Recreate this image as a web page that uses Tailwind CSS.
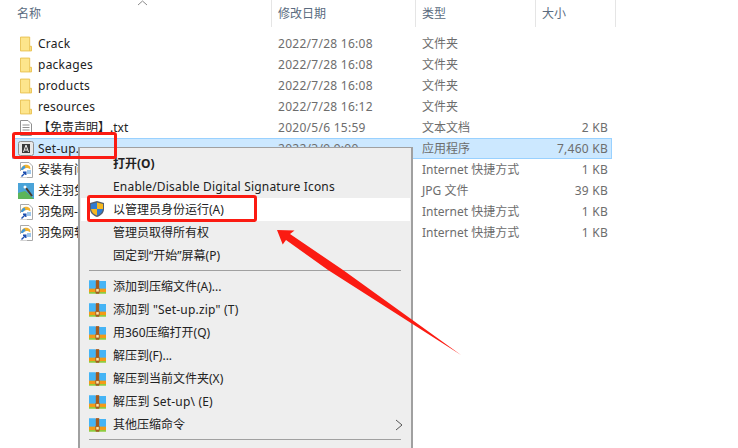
<!DOCTYPE html>
<html lang="zh">
<head>
<meta charset="utf-8">
<script src="https://cdn.jsdelivr.net/npm/@tailwindcss/browser@4"></script>
</head>
<body class="bg-white">
<svg width="0" height="0" class="absolute">
  <defs>
    <symbol id="folder" viewBox="0 0 13 16">
      <path d="M.5.5H10.500V10.500H12.500V15.500H.5Z" fill="#fde58c" stroke="#e8c050"/>
      <path d="M10.500 10.500V15.500" stroke="#e8c050"/>
    </symbol>
    <symbol id="link" viewBox="0 0 16 16">
      <path d="M2.500.5H11L14.500 4V15.500H2.500Z" fill="#fff" stroke="#a9a9a9"/>
      <path d="M3 8C3 3 9 1 12 4.500L12.500 7.500C9 5 6 6 5 8Z" fill="#f2b32e"/>
      <path d="M3 8C3 6 4.500 4 6.500 3.500L7.500 6C6 6.500 5 7.500 5 8Z" fill="#3f9ae0"/>
      <path d="M9 8H13V12H9Z" fill="#9cc6ec"/>
      <rect x="2" y="9" width="7" height="6.500" fill="#fff"/>
      <path d="M3.500 14.500L7.500 10.500M5 10.200H7.800V13" stroke="#1d4fb0" stroke-width="1.400" fill="none"/>
    </symbol>
    <symbol id="zip" viewBox="0 0 20 17">
      <path d="M0 2V1H7L9 2H20V13H0Z" fill="#45b4f5"/>
      <rect y="11" width="20" height="4" fill="#f59a16"/>
      <rect y="15" width="20" height="2" fill="#8ccb3c"/>
      <rect x="8" y="1" width="4" height="16" fill="#a35a1e"/>
      <rect x="8" y="11" width="4" height="4" fill="#ffe9a8" stroke="#a35a1e"/>
    </symbol>
  </defs>
</svg>

<main class="relative w-[738px] h-[448px] overflow-hidden font-['Noto_Sans','Noto_Sans_CJK_SC',sans-serif] text-[12px]">
  <!-- sort arrow -->
  <svg class="absolute left-[137px] top-0" width="11" height="6" viewBox="0 0 11 6" fill="none"><path d="M1 5L5.500 1L10 5" stroke="#8a8a8a"/></svg>

  <!-- header -->
  <header class="grid grid-cols-[272px_144px_120px_80px] w-[616px] h-[27px] text-[#5a6b80]">
    <div class="pl-[17px] pt-[4px] border-r border-[#e5e5e5] leading-[19px]">名称</div>
    <div class="pl-[6px] pt-[4px] border-r border-[#e5e5e5] leading-[19px]">修改日期</div>
    <div class="pl-[6px] pt-[4px] border-r border-[#e5e5e5] leading-[19px]">类型</div>
    <div class="pl-[6px] pt-[4px] border-r border-[#e5e5e5] leading-[19px]">大小</div>
  </header>

  <!-- file rows -->
  <section class="pt-[6px] w-[612px] text-[#6d6d6d] leading-[21px]">
    <div class="grid grid-cols-[272px_144px_120px_76px] h-[21px]"><div class="flex items-center pl-[20px] gap-[6px] text-[#222] tracking-[0.25px]"><svg class="w-[12px] h-[16px]"><use href="#folder"/></svg>Crack</div><div class="pl-[6px] tracking-[0.27px]">2022/7/28 16:08</div><div class="pl-[6px]">文件夹</div><div></div></div>
    <div class="grid grid-cols-[272px_144px_120px_76px] h-[21px]"><div class="flex items-center pl-[20px] gap-[6px] text-[#222] tracking-[0.25px]"><svg class="w-[12px] h-[16px]"><use href="#folder"/></svg>packages</div><div class="pl-[6px] tracking-[0.27px]">2022/7/28 16:08</div><div class="pl-[6px]">文件夹</div><div></div></div>
    <div class="grid grid-cols-[272px_144px_120px_76px] h-[21px]"><div class="flex items-center pl-[20px] gap-[6px] text-[#222] tracking-[0.25px]"><svg class="w-[12px] h-[16px]"><use href="#folder"/></svg>products</div><div class="pl-[6px] tracking-[0.27px]">2022/7/28 16:08</div><div class="pl-[6px]">文件夹</div><div></div></div>
    <div class="grid grid-cols-[272px_144px_120px_76px] h-[21px]"><div class="flex items-center pl-[20px] gap-[6px] text-[#222] tracking-[0.25px]"><svg class="w-[12px] h-[16px]"><use href="#folder"/></svg>resources</div><div class="pl-[6px] tracking-[0.27px]">2022/7/28 16:12</div><div class="pl-[6px]">文件夹</div><div></div></div>
    <div class="grid grid-cols-[272px_144px_120px_76px] h-[21px]"><div class="flex items-center pl-[20px] gap-[6px] text-[#222]"><svg class="w-[12px] h-[16px]" viewBox="0 0 12 16" fill="none"><path d="M.5.5H8L11.500 4V15.500H.5Z" fill="#fff" stroke="#8f8f8f"/><path d="M2.500 5H9.500M2.500 7.500H9.500M2.500 10H9.500M2.500 12.500H9.500" stroke="#8f8f8f"/></svg>【免责声明】.txt</div><div class="pl-[6px] tracking-[0.27px]">2020/5/6 15:59</div><div class="pl-[6px]">文本文档</div><div class="text-right pr-[4px] tracking-[0.25px]">2 KB</div></div>
    <div class="grid grid-cols-[260px_144px_120px_76px] h-[21px] ml-[12px] w-[600px] bg-[#cce8ff] outline outline-1 -outline-offset-1 outline-[#99d1ff]"><div class="flex items-center pl-[6px] gap-[4px] text-[#222] tracking-[0.25px]"><svg class="w-[16px] h-[15px]" viewBox="0 0 16 15" fill="none"><rect x=".5" y=".5" width="15" height="14" rx="2" fill="#e8e8e8" stroke="#8e8e8e"/><rect x="4" y="3" width="8" height="9" fill="#3a3a3a"/><path d="M5.500 11L8 4L10.500 11M6.500 9H9.500" stroke="#eee"/></svg>Set-up.</div><div class="pl-[6px] tracking-[0.27px]">2022/3/9 9:00</div><div class="pl-[6px]">应用程序</div><div class="text-right pr-[4px] tracking-[0.25px]">7,460 KB</div></div>
    <div class="grid grid-cols-[272px_144px_120px_76px] h-[21px]"><div class="flex items-center pl-[18px] gap-[4px] text-[#222]"><svg class="w-[16px] h-[16px]"><use href="#link"/></svg>安装有问题</div><div class="pl-[6px]"></div><div class="pl-[6px]">Internet 快捷方式</div><div class="text-right pr-[4px] tracking-[0.25px]">1 KB</div></div>
    <div class="grid grid-cols-[272px_144px_120px_76px] h-[21px]"><div class="flex items-center pl-[18px] gap-[4px] text-[#222]"><svg class="w-[16px] h-[16px]" viewBox="0 0 16 16"><rect width="16" height="16" fill="#4aa3d8"/><path d="M0 16V10L7 8L16 16Z" fill="#5cb55a"/><path d="M8 5L14 13" stroke="#4b3a2a" stroke-width="2"/><circle cx="7" cy="4" r="1.500" fill="#fff"/></svg>关注羽兔</div><div class="pl-[6px]"></div><div class="pl-[6px]">JPG 文件</div><div class="text-right pr-[4px] tracking-[0.25px]">39 KB</div></div>
    <div class="grid grid-cols-[272px_144px_120px_76px] h-[21px]"><div class="flex items-center pl-[18px] gap-[4px] text-[#222]"><svg class="w-[16px] h-[16px]"><use href="#link"/></svg>羽兔网-</div><div class="pl-[6px]"></div><div class="pl-[6px]">Internet 快捷方式</div><div class="text-right pr-[4px] tracking-[0.25px]">1 KB</div></div>
    <div class="grid grid-cols-[272px_144px_120px_76px] h-[21px]"><div class="flex items-center pl-[18px] gap-[4px] text-[#222]"><svg class="w-[16px] h-[16px]"><use href="#link"/></svg>羽兔网软件</div><div class="pl-[6px]"></div><div class="pl-[6px]">Internet 快捷方式</div><div class="text-right pr-[4px] tracking-[0.25px]">1 KB</div></div>
  </section>

  <!-- context menu -->
  <nav class="absolute left-[78px] top-[147px] w-[335px] h-[310px] bg-[#eeeeee] border-2 border-[#a0a0a0] border-t-[1px] pt-[4px] px-[1px] text-[#222] leading-[23px]">
    <div class="h-[23px] pl-[32px] font-bold">打开(O)</div>
    <div class="h-[23px] pl-[32px] tracking-[0.19px]">Enable/Disable Digital Signature Icons</div>
    <div class="h-[23px] pl-[32px] bg-white relative flex items-center">
      <svg class="absolute left-[8px] top-[2px]" width="16" height="18" viewBox="0 0 16 17"><path d="M8 .5L15 2.500V8.500C15 12.500 12 15 8 16.500C4 15 1 12.500 1 8.500V2.500Z" fill="#555f6e"/><path d="M8 2L8 8.500H2V3.500Z" fill="#2f7bd1"/><path d="M8 2L14 3.500V8.500H8Z" fill="#f6b81f"/><path d="M2 8.500H8V15C5 14 2.500 12 2 8.500Z" fill="#f6b81f"/><path d="M8 8.500H14C13.500 12 11 14 8 15Z" fill="#2f7bd1"/></svg>
      以管理员身份运行(A)
    </div>
    <div class="h-[23px] pl-[32px]">管理员取得所有权</div>
    <div class="h-[23px] pl-[32px]">固定到“开始”屏幕(P)</div>
    <div class="h-px bg-[#a0a0a0] ml-[8px] mr-[9px] mt-[3px] mb-[5px]"></div>
    <div class="h-[23px] pl-[32px] relative -mt-[1px]"><svg class="absolute left-[8px] top-[4px] w-[17px] h-[15px]"><use href="#zip"/></svg>添加到压缩文件(A)...</div>
    <div class="h-[23px] pl-[32px] relative tracking-[0.2px]"><svg class="absolute left-[8px] top-[4px] w-[17px] h-[15px]"><use href="#zip"/></svg>添加到 "Set-up.zip" (T)</div>
    <div class="h-[23px] pl-[32px] relative"><svg class="absolute left-[8px] top-[4px] w-[17px] h-[15px]"><use href="#zip"/></svg>用360压缩打开(Q)</div>
    <div class="h-[23px] pl-[32px] relative"><svg class="absolute left-[8px] top-[4px] w-[17px] h-[15px]"><use href="#zip"/></svg>解压到(F)...</div>
    <div class="h-[23px] pl-[32px] relative"><svg class="absolute left-[8px] top-[4px] w-[17px] h-[15px]"><use href="#zip"/></svg>解压到当前文件夹(X)</div>
    <div class="h-[23px] pl-[32px] relative tracking-[0.2px]"><svg class="absolute left-[8px] top-[4px] w-[17px] h-[15px]"><use href="#zip"/></svg>解压到 Set-up\ (E)</div>
    <div class="h-[23px] pl-[32px] relative"><svg class="absolute left-[8px] top-[4px] w-[17px] h-[15px]"><use href="#zip"/></svg>其他压缩命令<svg class="absolute right-[7px] top-[6px]" width="8" height="12" viewBox="0 0 8 12" fill="none"><path d="M1 1L7 6L1 11" stroke="#555"/></svg></div>
    <div class="h-px bg-[#a0a0a0] ml-[8px] mr-[9px] mt-[3px]"></div>
  </nav>

  <!-- red annotations -->
  <div class="absolute left-[12px] top-[132px] w-[105px] h-[27px] border-[3px] border-[#fb1b12] rounded-[3px]"></div>
  <div class="absolute left-[87px] top-[195px] w-[170px] h-[27px] border-[3px] border-[#fb1b12] rounded-[3px]"></div>
  <svg class="absolute left-[270px] top-[225px]" width="200" height="135" viewBox="0 0 200 135"><path d="M7 5L24.500 5.500L20 9L73 45L191 130L58 45L16 15L12.700 19.500Z" fill="#fb1b12"/></svg>
</main>
</body>
</html>
